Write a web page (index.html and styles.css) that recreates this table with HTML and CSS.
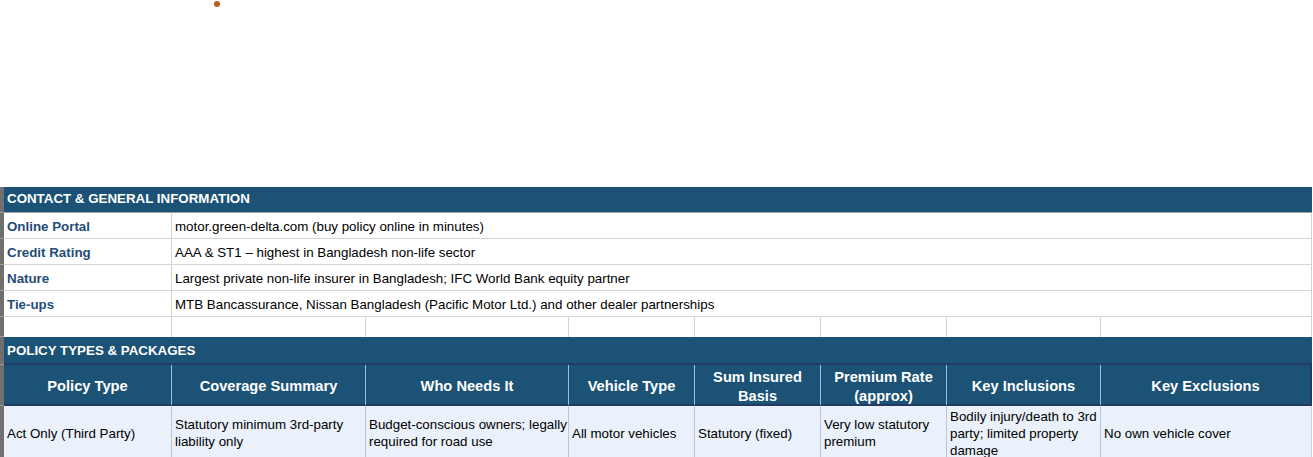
FILE: index.html
```html
<!DOCTYPE html>
<html>
<head>
<meta charset="utf-8">
<link rel="stylesheet" href="styles.css">
</head>
<body>
<div class="top">
  <span class="dot"></span>
</div>
<div class="sheet">
  <div class="strip"></div><div class="sec-head sec1 span8">CONTACT &amp; GENERAL INFORMATION</div>

  <div class="strip"></div><div class="lbl">Online Portal</div><div class="val span7">motor.green-delta.com (buy policy online in minutes)</div>
  <div class="strip"></div><div class="lbl">Credit Rating</div><div class="val span7">AAA &amp; ST1 – highest in Bangladesh non-life sector</div>
  <div class="strip"></div><div class="lbl">Nature</div><div class="val span7">Largest private non-life insurer in Bangladesh; IFC World Bank equity partner</div>
  <div class="strip"></div><div class="lbl">Tie-ups</div><div class="val span7">MTB Bancassurance, Nissan Bangladesh (Pacific Motor Ltd.) and other dealer partnerships</div>

  <div class="strip"></div>
  <div class="empty"></div><div class="empty"></div><div class="empty"></div><div class="empty"></div>
  <div class="empty"></div><div class="empty"></div><div class="empty"></div><div class="empty last"></div>

  <div class="strip"></div><div class="sec-head sec2 span8">POLICY TYPES &amp; PACKAGES</div>

  <div class="strip"></div>
  <div class="ch">Policy Type</div>
  <div class="ch">Coverage Summary</div>
  <div class="ch">Who Needs It</div>
  <div class="ch">Vehicle Type</div>
  <div class="ch">Sum Insured Basis</div>
  <div class="ch">Premium Rate (approx)</div>
  <div class="ch">Key Inclusions</div>
  <div class="ch last">Key Exclusions</div>

  <div class="strip"></div>
  <div class="cell first">Act Only (Third Party)</div>
  <div class="cell">Statutory minimum 3rd-party liability only</div>
  <div class="cell">Budget-conscious owners; legally required for road use</div>
  <div class="cell">All motor vehicles</div>
  <div class="cell">Statutory (fixed)</div>
  <div class="cell">Very low statutory premium</div>
  <div class="cell">Bodily injury/death to 3rd party; limited property damage</div>
  <div class="cell last">No own vehicle cover</div>
</div>
</body>
</html>
```

FILE: styles.css
```css
html, body {
  margin: 0;
  padding: 0;
  background: #ffffff;
}
body {
  font-family: "Liberation Sans", Arial, sans-serif;
  font-size: 13.33px;
  color: #000;
  width: 1313px;
  height: 457px;
  overflow: hidden;
}
.top {
  height: 187px;
  position: relative;
}
.dot {
  position: absolute;
  left: 214px;
  top: 1px;
  width: 6px;
  height: 6px;
  border-radius: 50%;
  background: #c05a14;
}
.sheet {
  display: grid;
  grid-template-columns: 4px 168px 194px 203px 126px 126px 126px 154px 211px;
  grid-template-rows: 26px 26px 26px 26px 26px 20px 28px 41px 54px;
  width: 1313px;
}
.strip {
  background: #707070;
  border-bottom: 1px solid #9a9a9a;
  box-sizing: border-box;
}
.span8 { grid-column: span 8; }
.span7 { grid-column: span 7; }
.sec-head {
  background: #1c5275;
  color: #ffffff;
  font-weight: bold;
  display: flex;
  align-items: center;
  padding-left: 3px;
  box-sizing: border-box;
  border-bottom: 1px solid #a0a0a0;
}
.sec1 {
  padding-bottom: 3px;
}
.sec2 {
  border-bottom: 2px solid #223a64;
  padding-top: 1px;
}
.lbl, .val {
  display: flex;
  align-items: center;
  padding-left: 3px;
  padding-top: 1px;
  box-sizing: border-box;
  border-bottom: 1px solid #d4d4d4;
  border-right: 1px solid #d4d4d4;
}
.lbl {
  color: #1f4e79;
  font-weight: bold;
}
.empty {
  border-right: 1px solid #d4d4d4;
  box-sizing: border-box;
}
.ch {
  background: #1c5275;
  color: #ffffff;
  font-weight: bold;
  font-size: 14.67px;
  line-height: 19px;
  text-align: center;
  display: flex;
  align-items: center;
  justify-content: center;
  padding: 4px 6px 0;
  box-sizing: border-box;
  border-right: 1px solid #9ebfde;
  border-bottom: 2px solid #223a64;
}
.ch.last {
  border-right: 2px solid #223a64;
}
.cell {
  background: #eaf1fa;
  display: flex;
  align-items: center;
  padding: 0 0 0 3px;
  line-height: 17px;
  box-sizing: border-box;
  border-right: 1px solid #b7c7dc;
}
.cell.first {
  position: relative;
}
.cell.first::after {
  content: "";
  position: absolute;
  left: 0;
  right: 0;
  bottom: 2px;
  height: 1px;
  background: #1e7145;
}
.cell.last {
  border-right: 1px solid #c8cfd8;
}
```
